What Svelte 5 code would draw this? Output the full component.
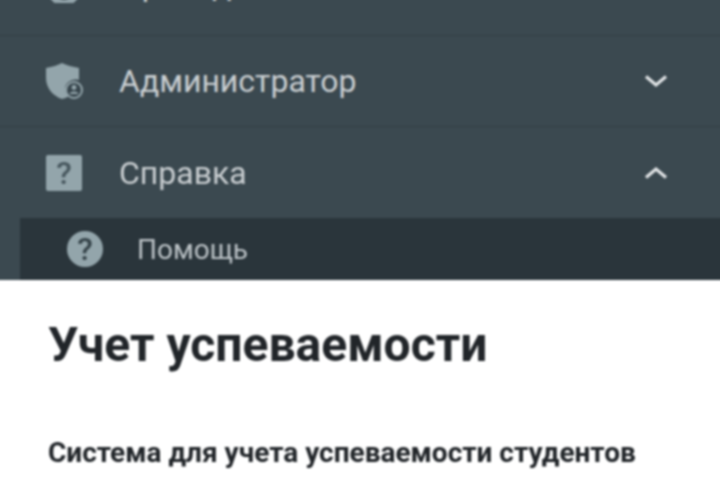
<script>
  const items = [
    { label: "Преподаватели", icon: "gear", open: false },
    { label: "Администратор", icon: "shield", open: false },
    { label: "Справка", icon: "square", open: true },
  ];
</script>

<div class="frame">
  <div class="page">
    <nav class="menu">
      {#each items as item (item.label)}
        <div class="row">
          <span class="icon">
            {#if item.icon === "shield"}
              <svg viewBox="0 0 38 36" width="38" height="36">
                <path d="M16 0 C20 2 27 4 33 5 V17 C26 15 19 20 19 26 C19 29 20 31 23 33 C21 34.500 18 35.500 16 36 C7 33 0 25 0 15 V5 C6 4 12 2 16 0 Z" fill="#93a5ab" />
                <circle cx="28" cy="27" r="8" fill="#37454c" stroke="#93a5ab" stroke-width="2" />
                <circle cx="28" cy="24.500" r="2.400" fill="#93a5ab" />
                <path d="M23.500 31 C24 27.500 32 27.500 32.500 31 Z" fill="#93a5ab" />
              </svg>
            {:else if item.icon === "square"}
              <span class="glyph qbox">?</span>
            {:else}
              <svg viewBox="0 -5 36 36" width="36" height="36">
                <circle cx="18" cy="18" r="13" fill="none" stroke="#93a5ab" stroke-width="6" />
              </svg>
            {/if}
          </span>
          <span class="label">{item.label}</span>
          <svg class="chev" class:open={item.open} viewBox="0 0 24 14" width="24" height="14">
            <path d="M2 2.500 L12 11 L22 2.500" fill="none" stroke="#e3e6e8" stroke-width="3.200" />
          </svg>
        </div>
      {/each}
      <div class="sub">
        <span class="glyph qcircle">?</span>
        <span class="sublabel">Помощь</span>
      </div>
    </nav>

    <main class="content">
      <h1>Учет успеваемости</h1>
      <p>Система для учета успеваемости студентов</p>
    </main>
  </div>
</div>

<style>
  :global(body) {
    background: #fff;
  }
  .frame {
    height: 480px;
    overflow: hidden;
  }
  /* wider than the window so the blur has no pale fringe at the sides */
  .page {
    margin: 0 -8px;
    font-family: Roboto, "Liberation Sans", sans-serif;
    filter: blur(0.85px);
  }
  .menu {
    margin-top: -65px;
    background: #3b4950;
    display: flex;
    flex-direction: column;
  }
  .row {
    height: 90px;
    border-bottom: 1px solid #323f45;
    display: flex;
    align-items: center;
    padding: 0 60px 0 54px;
  }
  .row:nth-child(1) {
    height: 100px;
  }
  .row:nth-child(3) {
    border-bottom: 0;
    height: 91px;
  }
  .icon {
    width: 73px;
    display: flex;
    align-items: center;
  }
  .label {
    flex: 1;
    font-size: 32px;
    color: #c9ced1;
  }
  .glyph {
    width: 36px;
    height: 36px;
    background: #93a5ab;
    font-size: 32px;
    font-weight: 500;
    display: flex;
    align-items: center;
    justify-content: center;
  }
  .qbox {
    border-radius: 2px;
    color: #48585f;
  }
  .chev.open {
    transform: rotate(180deg);
  }
  .sub {
    margin-left: 28px;
    height: 62px;
    background: #2a353b;
    display: flex;
    align-items: center;
    padding-left: 47px;
  }
  .qcircle {
    border-radius: 50%;
    color: #36444a;
  }
  .sublabel {
    margin-left: 34px;
    font-size: 28px;
    color: #bcc3c7;
  }
  .content {
    padding: 0 56px;
    color: #212529;
  }
  h1 {
    margin: 37px 0 0;
    font-size: 48px;
    line-height: 56px;
    font-weight: 700;
  }
  p {
    margin: 64px 0 0;
    font-size: 28px;
    line-height: 32px;
    font-weight: 700;
  }
</style>
